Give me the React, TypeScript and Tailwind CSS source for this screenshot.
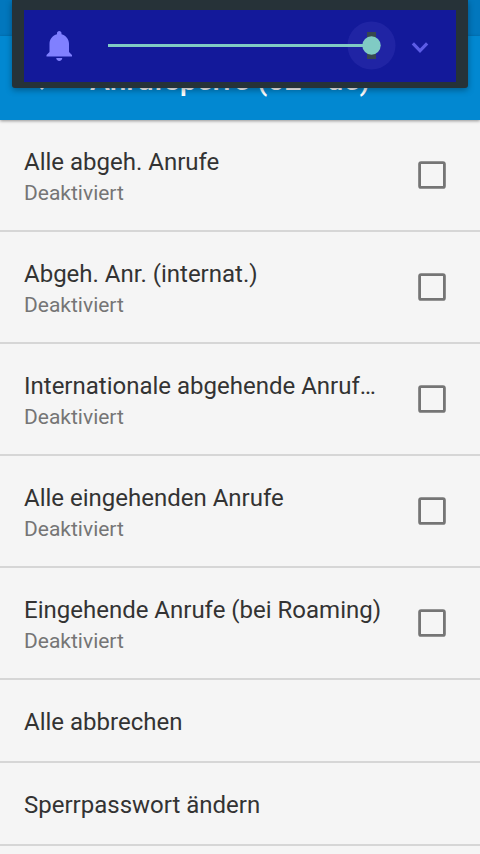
interface BarringOption {
  title: string;
  summary?: string;
}

const options: BarringOption[] = [
  { title: "Alle abgeh. Anrufe", summary: "Deaktiviert" },
  { title: "Abgeh. Anr. (internat.)", summary: "Deaktiviert" },
  { title: "Internationale abgehende Anruf…", summary: "Deaktiviert" },
  { title: "Alle eingehenden Anrufe", summary: "Deaktiviert" },
  { title: "Eingehende Anrufe (bei Roaming)", summary: "Deaktiviert" },
  { title: "Alle abbrechen" },
  { title: "Sperrpasswort ändern" },
];

function VolumePanel() {
  return (
    <div className="absolute left-3 top-0 h-[88px] w-[456px] rounded-b-[3px] bg-[#263238] px-3 pt-2.5 shadow-[0_2px_6px_rgba(0,0,0,0.35)]">
      <div className="flex h-[72px] items-center bg-[#13199a] pl-[18px] pr-[18px]">
        <svg className="size-9 shrink-0" viewBox="0 0 24 24" fill="#8080ff">
          <path d="M11.5 22c1.1 0 2-.9 2-2h-4c0 1.1.9 2 2 2zm6.5-6v-5.5c0-3.07-2.13-5.64-5-6.32V3.5c0-.83-.67-1.5-1.5-1.5S10 2.67 10 3.5v.68c-2.87.68-5 3.25-5 6.32V16l-2 2v1h17v-1l-2-2z" />
        </svg>
        <svg className="ml-[30px] h-[72px] w-[294px] shrink-0" viewBox="0 0 294 72">
          <circle cx="263.5" cy="35.5" r="24" fill="#2024a4" />
          <rect x="259" y="22" width="9" height="27" fill="#37474f" />
          <rect x="0" y="34" width="263" height="3" fill="#80cbc4" />
          <circle cx="263.5" cy="35.5" r="9.2" fill="#80cbc4" />
        </svg>
        <svg className="mt-px size-9 shrink-0" viewBox="0 0 24 24" fill="#5c5ce6">
          <path d="M16 8.9 12 13 8 8.9l-1.5 1.5L12 16l5.5-5.6z" />
        </svg>
      </div>
    </div>
  );
}

function OptionRow({ title, summary }: BarringOption) {
  if (!summary) {
    return (
      <li className="flex h-[83px] items-center border-b-2 border-[#d6d6d6] px-6 pt-0.5">
        <span className="text-[24px] leading-7 text-[#333333]">{title}</span>
      </li>
    );
  }

  return (
    <li className="flex h-28 items-center border-b-2 border-[#d6d6d6] pl-6 pr-8">
      <div className="min-w-0 flex-1 pt-1">
        <p className="whitespace-nowrap text-[24px] leading-8 text-[#333333]">{title}</p>
        <p className="text-[21px] leading-[30px] text-[#757575]">{summary}</p>
      </div>
      <svg className="size-8 shrink-0" viewBox="0 0 32 32" fill="none">
        <rect x="3.6" y="3.6" width="24.8" height="24.8" rx="1.5" stroke="#757575" strokeWidth="2.8" />
      </svg>
    </li>
  );
}

export default function App() {
  return (
    <div className="relative h-[854px] w-[480px] overflow-hidden bg-[#f5f5f5] font-[Roboto,sans-serif]">
      <div className="h-9 bg-[#0277bd]" />
      <header className="relative flex h-[84px] items-center bg-[#0288d1] pl-6 shadow-[0_1px_3px_rgba(0,0,0,0.4)]">
        <svg className="size-9 shrink-0" viewBox="0 0 24 24" fill="#ffffff">
          <path d="M20 11H7.83l5.59-5.59L12 4l-8 8 8 8 1.41-1.41L7.83 13H20v-2z" />
        </svg>
        <h1 className="ml-[30px] whitespace-nowrap pt-0.5 text-[30px] font-medium text-white">
          Anrufsperre (o2 - de)
        </h1>
      </header>
      <ul>
        {options.map((option) => (
          <OptionRow key={option.title} {...option} />
        ))}
      </ul>
      <VolumePanel />
    </div>
  );
}
